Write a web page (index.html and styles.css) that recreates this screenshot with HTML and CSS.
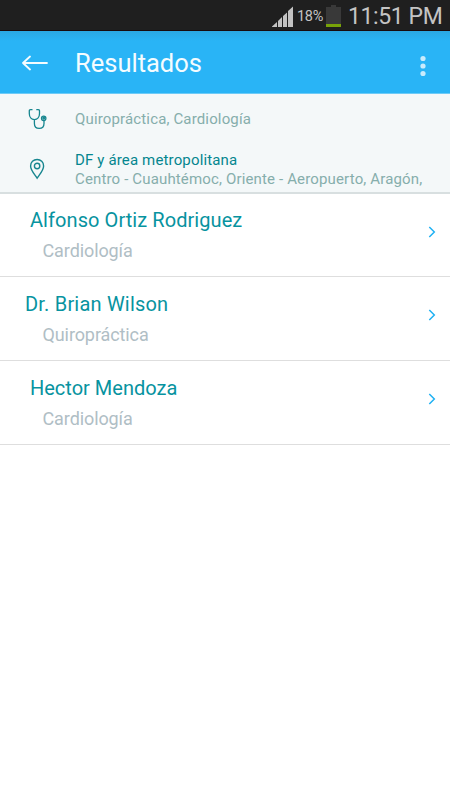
FILE: index.html
```html
<!DOCTYPE html>
<html lang="es">
<head>
<meta charset="utf-8">
<title>Resultados</title>
<link rel="stylesheet" href="styles.css">
</head>
<body>
<div class="status">
  <svg class="signal" width="22" height="22" viewBox="0 0 22 22"><path d="M0 21V20.500L5 16V21zM6 21V15L10 11V21zM11 21V10L15 6.500V21zM16 21V5L21 0.500V21z" fill="#c2c2c2"/></svg>
  <span class="percent">18%</span>
  <svg class="battery" width="16" height="22" viewBox="0 0 16 22"><path d="M0 2H5V0H10V2H15V22H0z" fill="#393939"/><path d="M0 19H15V22H0z" fill="#78a208"/></svg>
  <span class="clock">11:51 PM</span>
</div>
<header class="bar">
  <svg class="back" width="26" height="16" viewBox="0 0 26 16" fill="none" stroke="#f4fcff" stroke-width="1.800" stroke-linecap="round" stroke-linejoin="round"><path d="M25 8H1M8 1.500L1 8L8 14.500"/></svg>
  <h1 class="title">Resultados</h1>
  <svg class="more" width="6" height="22" viewBox="0 0 6 22" fill="#c9ebfc"><circle cx="3" cy="3.500" r="2.600"/><circle cx="3" cy="11" r="2.600"/><circle cx="3" cy="18.500" r="2.600"/></svg>
</header>
<section class="filters">
  <div class="filter specialty">
    <svg class="icon" width="20" height="22" viewBox="0 0 20 22" fill="none" stroke="#17868f" stroke-width="1.300" stroke-linecap="round"><path d="M4 1.700H2.500Q1.300 1.700 1.300 3V5.500C1.300 9 3.300 11.600 6.400 11.600S11.500 9 11.500 5.500V3Q11.500 1.700 10.300 1.700H8.800M6.400 11.600V15.500C6.400 18.500 8.200 20.400 11.200 20.400S16 18.500 16 15.500V12.500"/><circle cx="15.700" cy="10.300" r="2.200"/><circle cx="15.700" cy="10.300" r=".8"/></svg>
    <span class="muted specialties">Quiropráctica, Cardiología</span>
  </div>
  <div class="filter location">
    <svg class="icon pin" width="20" height="22" viewBox="0 0 20 22" fill="none" stroke="#17868f" stroke-width="1.400"><path d="M9.100 20.200C7 16.700 2.600 12.500 2.600 8C2.600 4.200 5.400 1.500 9.100 1.500S15.600 4.200 15.600 8C15.600 12.500 11.300 16.700 9.100 20.200Z"/><circle cx="9.100" cy="8" r="2.700"/></svg>
    <div class="place"><div class="region">DF y área metropolitana</div><div class="muted zones">Centro - Cuauhtémoc, Oriente - Aeropuerto, Aragón,</div></div>
  </div>
</section>
<main>
  <article class="result"><div class="info"><h2 class="name n1">Alfonso Ortiz Rodriguez</h2><p class="kind">Cardiología</p></div><svg class="chevron" width="8" height="12" viewBox="0 0 8 12"><path d="M1.300 1L6.300 6L1.300 11"/></svg></article>
  <article class="result"><div class="info"><h2 class="name n2">Dr. Brian Wilson</h2><p class="kind">Quiropráctica</p></div><svg class="chevron" width="8" height="12" viewBox="0 0 8 12"><path d="M1.300 1L6.300 6L1.300 11"/></svg></article>
  <article class="result"><div class="info"><h2 class="name n3">Hector Mendoza</h2><p class="kind">Cardiología</p></div><svg class="chevron" width="8" height="12" viewBox="0 0 8 12"><path d="M1.300 1L6.300 6L1.300 11"/></svg></article>
</main>
</body>
</html>
```
FILE: styles.css
```css
* { box-sizing: border-box; }
body { margin: 0; background: #fff; font-family: Roboto, sans-serif; white-space: nowrap; }
h1, h2, p { margin: 0; font-weight: 400; }
svg { display: block; flex: none; }
.status { display: flex; align-items: center; height: 31px; padding-left: 272px; background: #1f1f1f; border-bottom: 1px solid #180b0d; color: #c4c4c4; }
.signal { margin-top: 3px; }
.percent { width: 32px; padding-left: 3px; font-size: 14.500px; letter-spacing: -.3px; margin-top: 2px; }
.battery { margin-top: 2px; }
.clock { margin-left: 6px; font-size: 23px; letter-spacing: -.4px; margin-top: 2px; }
.bar { display: flex; align-items: center; height: 63px; padding: 2px 24.500px 0 22px; background: linear-gradient(#2ba8e3, #29b4f6 10px); border-bottom: 1px solid #6dcbf7; }
.title { margin-left: 27px; font-size: 25.500px; line-height: 30px; color: #f4fcff; }
.more { margin: 6px 0 0 auto; }
.filters { height: 100px; background: #f4f8f9; border-bottom: 2px solid #d8dfe0; padding: 14px 0 0 28px; }
.filter { display: flex; }
.icon { margin-right: 27px; }
.specialty { height: 42px; }
.specialties { margin-top: 1px; }
.pin { margin-top: 8px; }
.muted, .region { font-size: 15px; line-height: 20px; letter-spacing: .15px; color: #86aeac; }
.place { padding-top: 1px; }
.muted.zones, .region { line-height: 18px; }
.region { color: #04868f; }
.zones { padding-top: 1px; }
.result { display: flex; align-items: center; justify-content: space-between; height: 84px; padding: 0 14px 0 25px; border-bottom: 1px solid #dedede; }
.result:first-child { height: 83px; }
.info { padding-top: 2px; }
.name { padding-left: 5px; font-size: 20px; line-height: 30px; letter-spacing: .07px; color: #0793a0; }
.n2 { padding-left: 0; letter-spacing: .2px; }
.n3 { letter-spacing: 0; }
.kind { padding-left: 17.500px; font-size: 18px; line-height: 32px; letter-spacing: -.1px; color: #b0bec5; }
.chevron { fill: none; stroke: #1fb1f3; stroke-width: 1.500; margin-top: -7px; }
```
